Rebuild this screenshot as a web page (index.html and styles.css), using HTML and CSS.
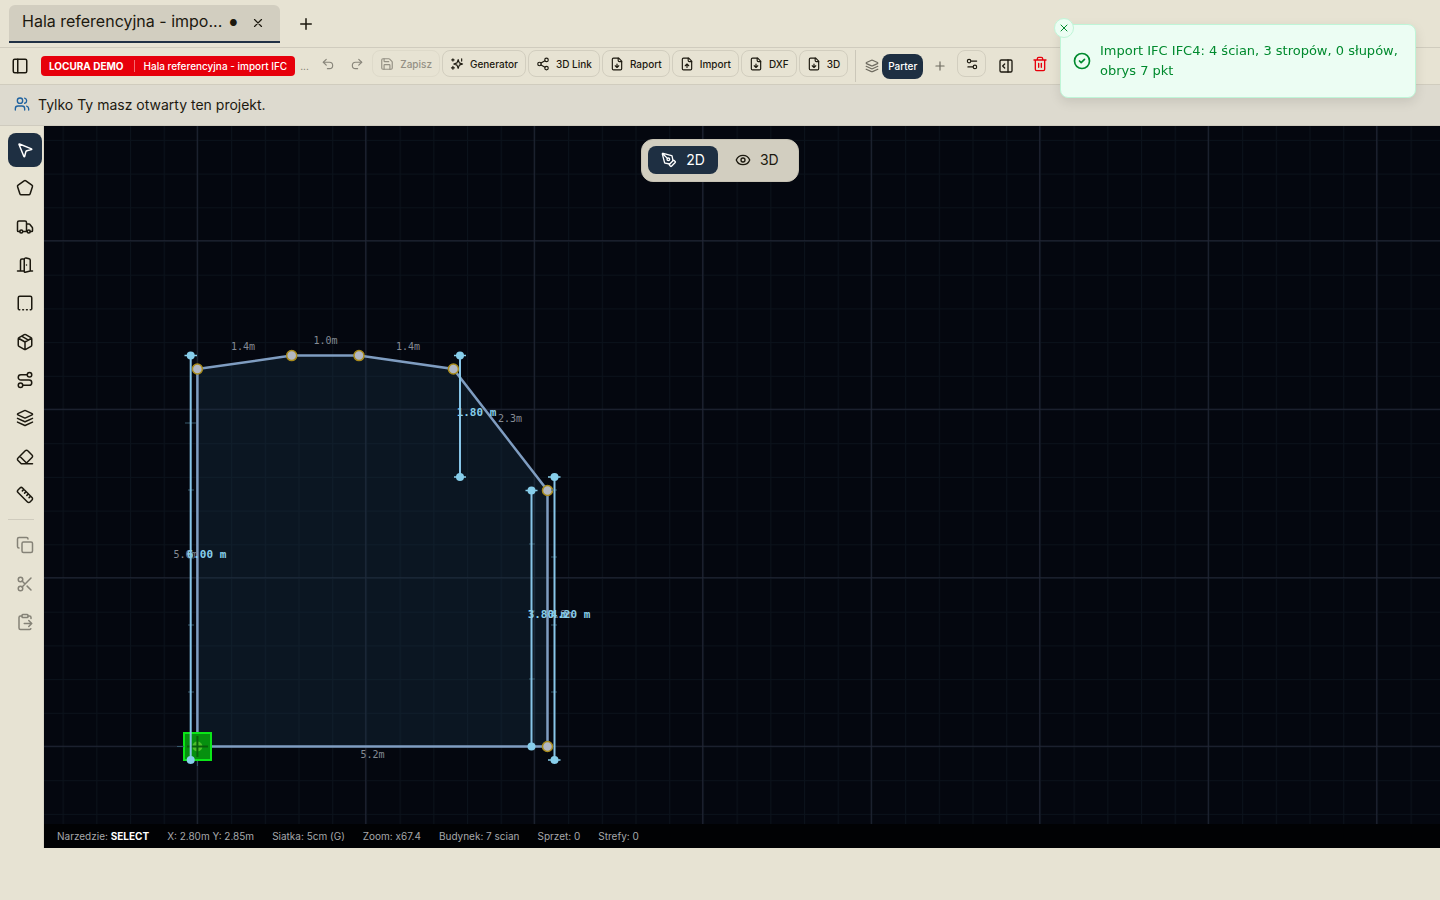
FILE: index.html
```html
<!DOCTYPE html>
<html lang="pl">
<head>
<meta charset="utf-8">
<title>Hala referencyjna - import IFC</title>
<link rel="stylesheet" href="styles.css">
</head>
<body>
<svg class="defs" aria-hidden="true">
  <symbol id="layers" viewBox="0 0 24 24"><path d="m12.83 2.18a2 2 0 0 0-1.66 0L2.6 6.08a1 1 0 0 0 0 1.83l8.58 3.91a2 2 0 0 0 1.66 0l8.58-3.9a1 1 0 0 0 0-1.83Z"/><path d="m22 12.5-9.17 4.15a2 2 0 0 1-1.66 0L2 12.5M22 17.5l-9.17 4.15a2 2 0 0 1-1.66 0L2 17.5"/></symbol>
  <symbol id="x" viewBox="0 0 24 24"><path d="M18 6 6 18M6 6l12 12"/></symbol>
  <symbol id="plus" viewBox="0 0 24 24"><path d="M5 12h14M12 5v14"/></symbol>
  <symbol id="file-down" viewBox="0 0 24 24"><path d="M15 2H6a2 2 0 0 0-2 2v16a2 2 0 0 0 2 2h12a2 2 0 0 0 2-2V7Z"/><path d="M14 2v4a2 2 0 0 0 2 2h4M12 18v-6M9 15l3 3 3-3"/></symbol>
  <symbol id="file-up" viewBox="0 0 24 24"><path d="M15 2H6a2 2 0 0 0-2 2v16a2 2 0 0 0 2 2h12a2 2 0 0 0 2-2V7Z"/><path d="M14 2v4a2 2 0 0 0 2 2h4M12 12v6M15 15l-3-3-3 3"/></symbol>
</svg>
<div class="app">
  <header class="tabs">
    <div class="tab">
      <span class="tab-title">Hala referencyjna - impo...</span>
      <span class="dirty">●</span>
      <button class="plain" aria-label="Zamknij kartę"><svg class="icon s14"><use href="#x"/></svg></button>
    </div>
    <button class="plain new-tab" aria-label="Nowa karta"><svg class="icon s18"><use href="#plus"/></svg></button>
  </header>

  <div class="toolbar">
    <button class="plain" aria-label="Panel boczny"><svg class="icon s18" viewBox="0 0 24 24"><rect x="3" y="3" width="18" height="18" rx="2"/><path d="M9 3v18"/></svg></button>
    <div class="badge"><strong>LOCURA DEMO</strong><span class="badge-line"></span><span>Hala referencyjna - import IFC</span></div>
    <span class="more">...</span>
    <div class="actions">
      <button class="plain history" disabled aria-label="Cofnij"><svg class="icon s14" viewBox="0 0 24 24"><path d="M9 14 4 9l5-5"/><path d="M4 9h10.500a5.500 5.500 0 0 1 0 11H11"/></svg></button>
      <button class="plain history" disabled aria-label="Ponów"><svg class="icon s14" viewBox="0 0 24 24"><path d="m15 14 5-5-5-5"/><path d="M20 9H9.500a5.500 5.500 0 0 0 0 11H13"/></svg></button>
      <button class="action" disabled><svg class="icon s14" viewBox="0 0 24 24"><path d="M15.200 3a2 2 0 0 1 1.400.6l3.800 3.800a2 2 0 0 1 .6 1.400V19a2 2 0 0 1-2 2H5a2 2 0 0 1-2-2V5a2 2 0 0 1 2-2z"/><path d="M17 21v-7a1 1 0 0 0-1-1H8a1 1 0 0 0-1 1v7M7 3v4a1 1 0 0 0 1 1h7"/></svg>Zapisz</button>
      <button class="action"><svg class="icon s14" viewBox="0 0 24 24"><path d="M14 4.500 16 10l5.500 2L16 14l-2 5.500L12 14l-5.500-2L12 10Z"/><path d="M5 3v4M3 5h4M20 3v4M5 16v5M2.500 18.500h5"/></svg>Generator</button>
      <button class="action"><svg class="icon s14" viewBox="0 0 24 24"><circle cx="18" cy="5" r="3"/><circle cx="6" cy="12" r="3"/><circle cx="18" cy="19" r="3"/><path d="m8.590 13.510 6.830 3.980M15.410 6.510l-6.820 3.980"/></svg>3D Link</button>
      <button class="action"><svg class="icon s14"><use href="#file-down"/></svg>Raport</button>
      <button class="action"><svg class="icon s14"><use href="#file-up"/></svg>Import</button>
      <button class="action"><svg class="icon s14"><use href="#file-down"/></svg>DXF</button>
      <button class="action"><svg class="icon s14"><use href="#file-down"/></svg>3D</button>
    </div>
    <div class="floors">
      <svg class="icon s14"><use href="#layers"/></svg>
      <button class="floor">Parter</button>
      <button class="plain add-floor" aria-label="Dodaj piętro"><svg class="icon s14"><use href="#plus"/></svg></button>
    </div>
    <div class="view-tools">
      <button class="action square" aria-label="Ustawienia"><svg class="icon s14" viewBox="0 0 24 24"><path d="M20 7h-9M14 17H5"/><circle cx="17" cy="17" r="3"/><circle cx="7" cy="7" r="3"/></svg></button>
      <button class="plain panel-right" aria-label="Panel prawy"><svg class="icon s16" viewBox="0 0 24 24"><rect x="3" y="3" width="18" height="18" rx="2"/><path d="M15 3v18M10 9l-3 3 3 3"/></svg></button>
      <button class="plain trash" aria-label="Usuń"><svg class="icon s16" viewBox="0 0 24 24"><path d="M3 6h18M19 6v14a2 2 0 0 1-2 2H7a2 2 0 0 1-2-2V6M8 6V4a2 2 0 0 1 2-2h4a2 2 0 0 1 2 2v2M10 11v6M14 11v6"/></svg></button>
    </div>
  </div>

  <div class="presence">
    <svg class="icon s16" viewBox="0 0 24 24"><path d="M16 21v-2a4 4 0 0 0-4-4H6a4 4 0 0 0-4 4v2"/><circle cx="9" cy="7" r="4"/><path d="M22 21v-2a4 4 0 0 0-3-3.870M16 3.130a4 4 0 0 1 0 7.750"/></svg>
    <span>Tylko Ty masz otwarty ten projekt.</span>
  </div>

  <main class="workspace">
    <nav class="tools" aria-label="Narzędzia">
      <div class="tool-group draw">
        <button class="tool active" aria-label="Zaznacz"><svg class="icon s18" viewBox="0 0 24 24"><path d="M4.037 4.688a.495.495 0 0 1 .651-.651l16 6.500a.5.5 0 0 1-.063.947l-6.124 1.580a2 2 0 0 0-1.438 1.435l-1.579 6.126a.5.5 0 0 1-.947.063z"/></svg></button>
        <button class="tool" aria-label="Obrys"><svg class="icon s18" viewBox="0 0 24 24"><path d="M10.830 2.380a2 2 0 0 1 2.340 0l8 5.740a2 2 0 0 1 .73 2.250l-3.040 9.260a2 2 0 0 1-1.900 1.370H7.040a2 2 0 0 1-1.900-1.370L2.100 10.370a2 2 0 0 1 .73-2.250z"/></svg></button>
        <button class="tool" aria-label="Sprzęt"><svg class="icon s18" viewBox="0 0 24 24"><path d="M14 18V6a2 2 0 0 0-2-2H4a2 2 0 0 0-2 2v11a1 1 0 0 0 1 1h2M15 18H9M19 18h2a1 1 0 0 0 1-1v-3.650a1 1 0 0 0-.22-.624l-3.480-4.350A1 1 0 0 0 17.520 8H14"/><circle cx="17" cy="18" r="2"/><circle cx="7" cy="18" r="2"/></svg></button>
        <button class="tool" aria-label="Drzwi"><svg class="icon s18" viewBox="0 0 24 24"><path d="M11 20H2M11 4.562v16.157a1 1 0 0 0 1.242.97L19 20V5.562a2 2 0 0 0-1.515-1.940l-4-1A2 2 0 0 0 11 4.561zM11 4H8a2 2 0 0 0-2 2v14M14 12h.01M22 20h-3"/></svg></button>
        <button class="tool" aria-label="Strefa"><svg class="icon s18" viewBox="0 0 24 24"><path d="M3 20V5a2 2 0 0 1 2-2h14a2 2 0 0 1 2 2v15M4 21h1M9 21h1M14 21h1M19 21h1"/></svg></button>
        <button class="tool" aria-label="Obiekt"><svg class="icon s18" viewBox="0 0 24 24"><path d="M11 21.730a2 2 0 0 0 2 0l7-4A2 2 0 0 0 21 16V8a2 2 0 0 0-1-1.730l-7-4a2 2 0 0 0-2 0l-7 4A2 2 0 0 0 3 8v8a2 2 0 0 0 1 1.730zM12 22V12M3.290 7 12 12l8.710-5M7.500 4.270l9 5.150"/></svg></button>
        <button class="tool" aria-label="Trasa"><svg class="icon s18" viewBox="0 0 24 24"><circle cx="6" cy="19" r="3"/><path d="M9 19h8.500a3.500 3.500 0 0 0 0-7h-11a3.500 3.500 0 0 1 0-7H15"/><circle cx="18" cy="5" r="3"/></svg></button>
        <button class="tool" aria-label="Warstwy"><svg class="icon s18"><use href="#layers"/></svg></button>
        <button class="tool" aria-label="Gumka"><svg class="icon s18" viewBox="0 0 24 24"><path d="m7 21-4.300-4.300c-1-1-1-2.500 0-3.400l9.600-9.600c1-1 2.500-1 3.400 0l5.600 5.600c1 1 1 2.500 0 3.400L13 21M22 21H7M5 11l9 9"/></svg></button>
        <button class="tool" aria-label="Miarka"><svg class="icon s18" viewBox="0 0 24 24"><path d="M21.300 15.300a2.400 2.400 0 0 1 0 3.400l-2.600 2.600a2.400 2.400 0 0 1-3.400 0L2.700 8.700a2.410 2.410 0 0 1 0-3.400l2.600-2.600a2.410 2.410 0 0 1 3.400 0ZM14.500 12.500l2-2M11.500 9.500l2-2M8.500 6.500l2-2M17.500 15.500l2-2"/></svg></button>
      </div>
      <div class="tool-group clipboard">
        <button class="tool" disabled aria-label="Kopiuj"><svg class="icon s18" viewBox="0 0 24 24"><rect x="8" y="8" width="14" height="14" rx="2"/><path d="M4 16c-1.100 0-2-.9-2-2V4c0-1.100.9-2 2-2h10c1.100 0 2 .9 2 2"/></svg></button>
        <button class="tool" disabled aria-label="Wytnij"><svg class="icon s18" viewBox="0 0 24 24"><circle cx="6" cy="6" r="3"/><path d="M8.120 8.120 12 12M20 4 8.120 15.880M14.800 14.800 20 20"/><circle cx="6" cy="18" r="3"/></svg></button>
        <button class="tool" disabled aria-label="Wklej"><svg class="icon s18" viewBox="0 0 24 24"><rect x="8" y="2" width="8" height="4" rx="1"/><path d="M11 14h10M16 4h2a2 2 0 0 1 2 2v1.344M17 18l4-4-4-4M8 4H6a2 2 0 0 0-2 2v14a2 2 0 0 0 2 2h12a2 2 0 0 0 1.793-1.113"/></svg></button>
      </div>
    </nav>

    <section class="stage">
      <svg class="drawing" role="img" aria-label="Rzut budynku">
        <defs>
          <pattern id="minor" x="153.400" y="620.500" width="33.700" height="33.700" patternUnits="userSpaceOnUse"><path class="minor" d="M0 0H33.700M0 0V33.700"/></pattern>
          <pattern id="major" x="69" y="30.500" width="168.500" height="168.500" patternUnits="userSpaceOnUse"><path class="major" d="M84.250 0V168.500M0 84.250H168.500"/></pattern>
        </defs>
        <rect width="100%" height="100%" fill="url(#minor)"/>
        <rect width="100%" height="100%" fill="url(#major)"/>
        <g transform="translate(-44 -126)">
          <path class="outline" d="M197.400 369 291.700 355.600H359L453.400 369 547.500 490.500V746.500H197.400Z"/>
          <g class="lengths">
            <text x="243" y="350">1.4m</text><text x="325.500" y="344">1.0m</text><text x="408" y="350">1.4m</text><text x="510" y="422">2.3m</text><text x="560" y="618">3.8m</text><text x="372.500" y="758">5.2m</text><text x="185.500" y="558">5.6m</text>
          </g>
          <g class="nodes"><circle cx="197.400" cy="369" r="5"/><circle cx="291.700" cy="355.600" r="5"/><circle cx="359" cy="355.600" r="5"/><circle cx="453.400" cy="369" r="5"/><circle cx="547.500" cy="490.500" r="5"/><circle cx="547.500" cy="746.500" r="5"/></g>
          <rect class="origin" x="184" y="733" width="27" height="27"/>
          <circle class="origin-dot" cx="197.400" cy="746.500" r="5"/>
          <path class="origin-cross" d="M187 746.500H208M197.400 736V757"/>
          <path class="ticks" d="M185 423H196M188 490H194M188 558H194M188 625H194M188 692H194M529 544H535M529 611H535M529 679H535M551 490H557M551 557H557M551 625H557M551 692H557M177 746.500H184M197.400 761V766"/>
          <path class="dims" d="M190.700 355.600V760M460 355.600V477M531.500 490.500V746.500M554.500 477V760"/>
          <path class="caps" d="M184.500 355.600H197M454 355.600H466M454 477H466M525.500 490.500H537.500M548 477H560.500M548 760H560.500"/>
          <g class="ends"><circle cx="190.700" cy="355.600" r="4"/><circle cx="190.700" cy="760" r="4"/><circle cx="460" cy="355.600" r="4"/><circle cx="460" cy="477" r="4"/><circle cx="531.500" cy="490.500" r="4"/><circle cx="531.500" cy="746.500" r="4"/><circle cx="554.500" cy="477" r="4"/><circle cx="554.500" cy="760" r="4"/></g>
          <g class="dim-labels"><text x="206.500" y="558">6.00 m</text><text x="476.500" y="416">1.80 m</text><text x="547.500" y="618">3.80 m</text><text x="570.500" y="618">4.20 m</text></g>
        </g>
      </svg>
      <div class="mode">
        <button class="mode-btn active"><svg class="icon s16" viewBox="0 0 24 24"><path d="M15.707 21.293a1 1 0 0 1-1.414 0l-1.586-1.586a1 1 0 0 1 0-1.414l5.586-5.586a1 1 0 0 1 1.414 0l1.586 1.586a1 1 0 0 1 0 1.414z"/><path d="m18 13-1.375-6.874a1 1 0 0 0-.746-.776L3.235 2.028a1 1 0 0 0-1.207 1.207L5.350 15.879a1 1 0 0 0 .776.746L13 18M2.300 2.300l7.286 7.286"/><circle cx="11" cy="11" r="2"/></svg>2D</button>
        <button class="mode-btn"><svg class="icon s16" viewBox="0 0 24 24"><path d="M2.062 12.348a1 1 0 0 1 0-.696 10.750 10.750 0 0 1 19.876 0 1 1 0 0 1 0 .696 10.750 10.750 0 0 1-19.876 0"/><circle cx="12" cy="12" r="3"/></svg>3D</button>
      </div>
      <footer class="status">
        <span>Narzedzie: <strong>SELECT</strong></span><span>X: 2.80m Y: 2.85m</span><span>Siatka: 5cm (G)</span><span>Zoom: x67.4</span><span>Budynek: 7 scian</span><span>Sprzet: 0</span><span>Strefy: 0</span>
      </footer>
    </section>
  </main>
</div>
<div class="toast" role="status">
  <button class="toast-close" aria-label="Zamknij"><svg class="icon s12"><use href="#x"/></svg></button>
  <svg class="icon s20" viewBox="0 0 24 24"><circle cx="12" cy="12" r="9"/><path d="m9 12 2 2 4-4"/></svg>
  <p>Import IFC IFC4: 4 ścian, 3 stropów, 0 słupów, obrys 7 pkt</p>
</div>
</body>
</html>
```
FILE: styles.css
```css
* { box-sizing: border-box; }
body { margin: 0; background: #e7e3d3; color: #1c190f; font-family: Inter, "Liberation Sans", sans-serif; font-size: 14px; }
button { font: inherit; color: inherit; padding: 0; border: 0; background: none; }
.defs { display: none; }
.icon { display: block; flex: none; fill: none; stroke: currentColor; stroke-width: 2; stroke-linecap: round; stroke-linejoin: round; }
.s12 { width: 12px; height: 12px; }
.s14 { width: 14px; height: 14px; }
.s16 { width: 16px; height: 16px; }
.s18 { width: 18px; height: 18px; }
.s20 { width: 20px; height: 20px; }
.plain { display: flex; align-items: center; justify-content: center; }
.app { display: flex; flex-direction: column; min-height: 100vh; padding-bottom: 52px; }

.tabs { display: flex; align-items: center; height: 48px; padding: 0 9px; border-bottom: 1px solid #d0ccbe; }
.tab { display: flex; align-items: center; height: 38px; padding: 0 15px 0 13px; background: #d2cec0; border-bottom: 2px solid #203044; border-radius: 6px 6px 0 0; }
.tab-title { font-size: 16px; line-height: 24px; padding-bottom: 4px; }
.dirty { width: 12px; margin: 0 12px 0 5px; font-size: 9px; text-align: center; }
.new-tab { margin-left: 17px; }

.toolbar { display: flex; align-items: center; height: 37px; padding-left: 11px; border-bottom: 1px solid #d0ccbe; font-size: 10px; font-weight: 500; }
.badge { display: flex; align-items: center; height: 20px; margin-left: 12px; padding: 0 8px; border-radius: 4px; background: #e7000b; color: #fff; white-space: nowrap; }
.badge strong { font-weight: 700; }
.badge-line { width: 1px; height: 12px; margin: 0 9px 0 10px; background: #f36b70; }
.more { width: 9px; margin: 0 5px; color: #77746a; font-weight: 400; }
.actions { display: flex; align-items: center; gap: 2px; padding-bottom: 5px; }
.history { width: 27px; color: #88857a; }
.action { display: flex; align-items: center; gap: 6px; height: 27px; padding: 0 7px; border: 1px solid #d2cebf; border-radius: 8px; white-space: nowrap; }
.action:disabled { color: #949084; border-color: #dedaca; }
.floors { display: flex; align-items: center; gap: 3px; height: 32px; margin-left: 7px; padding-left: 9px; border-left: 1px solid #cbc7b9; color: #6d6a5f; }
.floor { height: 25px; padding: 0 6px; border-radius: 8px; background: #1e2f42; color: #fff; }
.add-floor { width: 27px; }
.view-tools { display: flex; align-items: center; padding-bottom: 5px; margin-left: 4px; }
.square { width: 29px; justify-content: center; }
.panel-right { width: 40px; padding-top: 5px; }
.trash { width: 28px; color: #e7000b; }

.presence { display: flex; align-items: center; gap: 8px; height: 41px; padding: 0 14px 2px; background: #dddacf; border-bottom: 1px solid #cfcbbf; }
.presence .icon { color: #1f62a0; }

.workspace { display: flex; flex: 1; }
.tools { display: flex; flex-direction: column; width: 44px; padding: 7px 2px 0 8px; border-right: 1px solid #d9d5c6; }
.tool-group { display: flex; flex-direction: column; justify-content: space-between; }
.draw { height: 379px; }
.clipboard { height: 120px; margin-top: 7px; padding-top: 8px; border-top: 1px solid #cfcbbd; margin-right: 7px; }
.tool { display: flex; align-items: center; justify-content: center; width: 34px; height: 34px; border-radius: 8px; }
.tool.active { background: #1e2f42; color: #fff; }
.tool:disabled { color: #858277; }

.stage { position: relative; display: flex; flex: 1; flex-direction: column; justify-content: space-between; background: #04070f; }
.drawing { position: absolute; width: 100%; height: 100%; }
.minor { fill: none; stroke: #0b121b; stroke-width: 2; }
.major { fill: none; stroke: #222736; stroke-width: 1; }
.outline { fill: #1a3347; fill-opacity: .35; stroke: #7f9dc1; stroke-width: 2.500; }
.drawing text { font-family: "DejaVu Sans Mono", monospace; text-anchor: middle; }
.lengths { fill: #858b94; font-size: 10px; }
.nodes { fill: #b2b8c4; stroke: #a98c1c; stroke-width: 1.500; }
.origin { fill: #06900f; stroke: #0be618; stroke-width: 2; }
.origin-dot { fill: #4bbd2a; }
.origin-cross { stroke: #08600c; stroke-width: 2; }
.dims { fill: none; stroke: #87c5e8; stroke-width: 2; }
.caps { stroke: #87ceeb; stroke-width: 1.500; }
.ticks { stroke: #375a6d; stroke-width: 1; }
.ends { fill: #87ceeb; }
.dim-labels { fill: #87ceeb; font-size: 11px; font-weight: 700; }

.mode { position: relative; display: flex; align-self: center; gap: 4px; margin: 13px 44px 0 0; padding: 6px 6px 7px; border: 1px solid #c6c2b4; border-radius: 12px; background: #d2cec0; }
.mode-btn { display: flex; align-items: center; gap: 9px; height: 28px; padding: 0 13px 1px; border-radius: 8px; }
.mode-btn.active { background: #1e2f42; color: #fff; }
.status { position: relative; display: flex; align-items: center; gap: 18px; height: 24px; padding: 0 13px; background: #010204; color: #a6a8ab; font-size: 10px; }
.status strong { color: #fff; }

.toast { position: fixed; top: 24px; right: 24px; display: flex; align-items: center; gap: 8px; width: 356px; padding: 16px 11px; border: 1px solid #bff5d7; border-radius: 8px; background: #ecfdf3; color: #008a2e; font: 13px/20px "DejaVu Sans", sans-serif; box-shadow: 0 4px 12px rgba(0, 0, 0, .1); }
.toast p { margin: 0; }
.toast-close { position: absolute; left: -7px; top: -7px; display: flex; align-items: center; justify-content: center; width: 20px; height: 20px; border: 1px solid #bff5d7; border-radius: 50%; background: #ecfdf3; }
```
